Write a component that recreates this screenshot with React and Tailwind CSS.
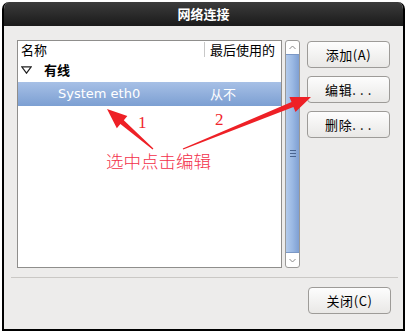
import React from "react";

const ui = { fontFamily: '"Noto Sans CJK SC", "DejaVu Sans", sans-serif' };
const latin = { fontFamily: '"DejaVu Sans", "Noto Sans CJK SC", sans-serif' };

function Btn({ children, className = "" }) {
  return (
    <div
      className={
        "flex h-[27px] w-[83px] items-center justify-center rounded-[4px] border border-[#9d9b98] bg-gradient-to-b from-[#fdfdfd] to-[#e9e8e6] text-[13px] tracking-[0.6px] text-black " +
        className
      }
      style={ui}
    >
      {children}
    </div>
  );
}

function Arrow({ x1, y1, x2, y2 }) {
  const dx = x2 - x1;
  const dy = y2 - y1;
  const len = Math.hypot(dx, dy);
  const ux = dx / len;
  const uy = dy / len;
  const nx = -uy;
  const ny = ux;
  const headLen = 20;
  const headW = 8;
  const bx = x2 - ux * headLen;
  const by = y2 - uy * headLen;
  const t0 = 0.6;
  const t1 = 2.6;
  const pts = [
    [x1 + nx * t0, y1 + ny * t0],
    [bx + nx * t1, by + ny * t1],
    [bx + nx * headW, by + ny * headW],
    [x2, y2],
    [bx - nx * headW, by - ny * headW],
    [bx - nx * t1, by - ny * t1],
    [x1 - nx * t0, y1 - ny * t0],
  ];
  return <polygon points={pts.map((p) => p.join(",")).join(" ")} fill="#ee2026" />;
}

export default function App() {
  return (
    <div className="relative h-[335px] w-[408px] bg-white pl-[2px] pt-[2px]">
      <div className="flex h-[329px] w-[403px] flex-col overflow-hidden rounded-t-[7px] border-x-2 border-b-2 border-black bg-[#edeceb]">
        <div
          className="flex h-[24px] shrink-0 items-center justify-center bg-gradient-to-b from-[#3c3c3c] to-[#1b1b1b] text-[13px] font-bold text-white"
          style={ui}
        >
          网络连接
        </div>
        <div className="flex shrink-0 pl-[13px] pt-[14px]">
          <div className="flex h-[228px] w-[265px] flex-col border border-[#8f8e8c] bg-white">
            <div className="flex h-[17px] items-center text-[13px] text-black" style={ui}>
              <div className="w-[186px] pl-[3px]">名称</div>
              <div className="h-[15px] w-px bg-[#c8c8c8]" />
              <div className="pl-[5px]">最后使用的</div>
            </div>
            <div className="flex h-[24px] items-center text-[13px] font-bold text-black" style={ui}>
              <svg width="11" height="8" viewBox="0 0 11 8" className="ml-[3px] mr-[12px]">
                <path d="M0.8 0.8 H10.2 L5.5 7.2 Z" fill="none" stroke="#222" strokeWidth="1.2" />
              </svg>
              有线
            </div>
            <div className="flex h-[24px] items-center bg-gradient-to-b from-[#a7c0e6] to-[#7c9fd2] text-[13px] text-white">
              <div className="w-[187px] pl-[40px]" style={latin}>
                System eth0
              </div>
              <div className="pl-[5px]" style={ui}>
                从不
              </div>
            </div>
          </div>
          <div className="ml-[3px] flex h-[228px] w-[15px] flex-col overflow-hidden rounded-[3px] border border-[#9a9997] bg-white">
            <div className="flex h-[13px] items-center justify-center">
              <svg width="7" height="5" viewBox="0 0 7 5">
                <path d="M0.5 4 L3.5 1 L6.5 4" fill="none" stroke="#8a8a8a" strokeWidth="1" />
              </svg>
            </div>
            <div className="flex flex-1 items-center justify-center border-y border-[#7b98c6] bg-gradient-to-r from-[#b3cbec] via-[#9ab8e3] to-[#7f9fd2]">
              <div className="flex flex-col gap-[2px]">
                <div className="h-px w-[6px] bg-[#4a6590]" />
                <div className="h-px w-[6px] bg-[#4a6590]" />
                <div className="h-px w-[6px] bg-[#4a6590]" />
              </div>
            </div>
            <div className="flex h-[14px] items-center justify-center">
              <svg width="7" height="5" viewBox="0 0 7 5">
                <path d="M0.5 1 L3.5 4 L6.5 1" fill="none" stroke="#8a8a8a" strokeWidth="1" />
              </svg>
            </div>
          </div>
          <div className="ml-[7px] flex flex-col gap-[8px] pt-px">
            <Btn>添加(A)</Btn>
            <Btn>编辑. . .</Btn>
            <Btn>删除. . .</Btn>
          </div>
        </div>
        <div className="ml-[7px] mr-[5px] mt-[9px] h-px shrink-0 bg-[#cac8c5]" />
        <div className="flex shrink-0 justify-end pr-[12px] pt-[9px]">
          <Btn>关闭(C)</Btn>
        </div>
      </div>

      <svg className="pointer-events-none absolute left-0 top-0" width="408" height="335">
        <Arrow x1={153} y1={149} x2={107} y2={109} />
        <Arrow x1={183} y1={149} x2={311} y2={97} />
      </svg>
      <div
        className="absolute left-[138px] top-[114px] text-[17px] leading-none text-[#f0262c]"
        style={{ fontFamily: '"Liberation Serif", serif' }}
      >
        1
      </div>
      <div
        className="absolute left-[215px] top-[111px] text-[17px] leading-none text-[#f0262c]"
        style={{ fontFamily: '"Liberation Serif", serif' }}
      >
        2
      </div>
      <div
        className="absolute left-[106px] top-[152px] text-[17.5px] leading-none text-[#f3304a]"
        style={{ fontFamily: '"Noto Sans CJK SC", sans-serif', fontWeight: 300 }}
      >
        选中点击编辑
      </div>
    </div>
  );
}
